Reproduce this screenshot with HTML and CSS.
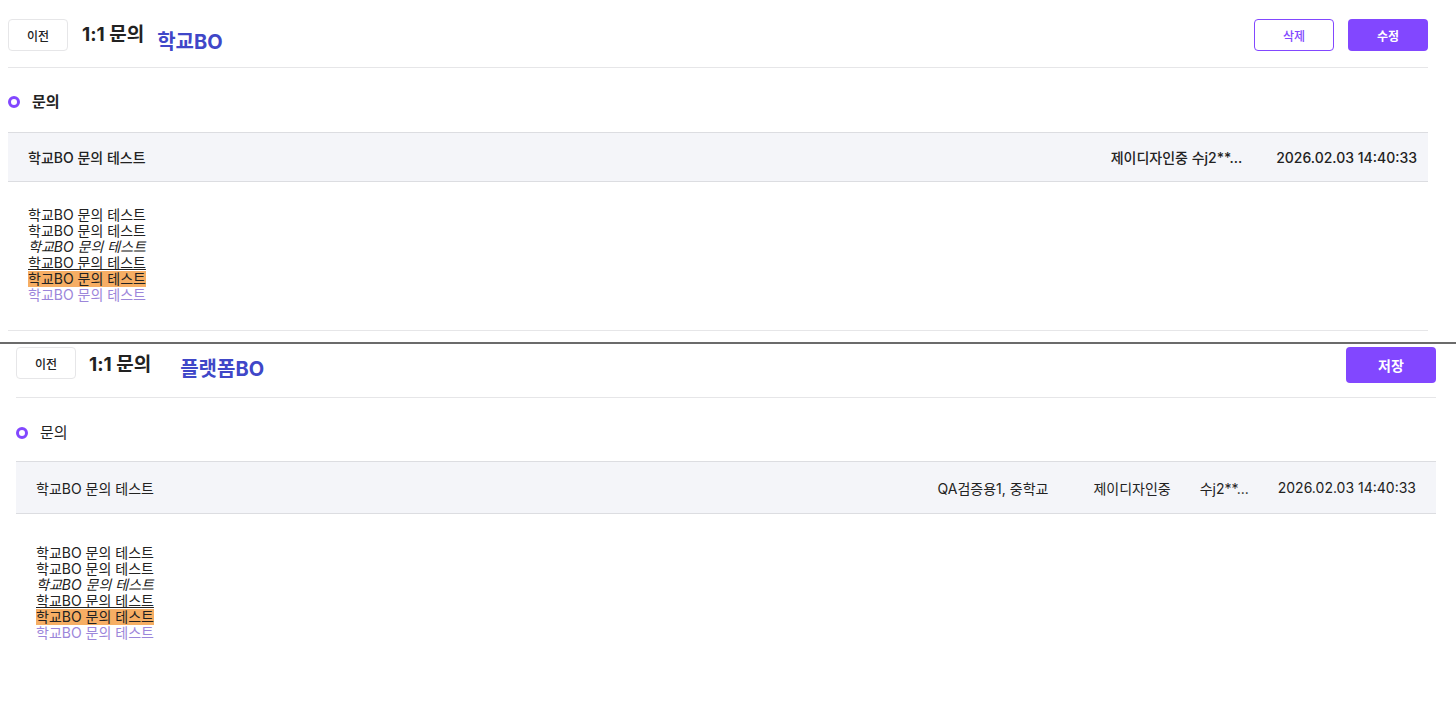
FILE: index.html
```html
<!DOCTYPE html>
<html lang="ko">
<head>
    <meta charset="UTF-8">
    <meta name="viewport" content="width=device-width, initial-scale=1.0">
    <title>1:1 문의</title>
    <link rel="stylesheet" href="styles.css">
</head>

<body>
    <!-- 학교BO 화면 -->
    <div class="panel panel-school">
        <div class="page-head">
            <div class="head-left">
                <button class="btn-back">이전</button>
                <h1 class="page-title">1:1 문의</h1>
                <span class="bo-label">학교BO</span>
            </div>
            <div class="head-right">
                <button class="btn-line">삭제</button>
                <button class="btn-fill">수정</button>
            </div>
        </div>

        <h2 class="section-title"><span class="dot"></span>문의</h2>

        <div class="inquiry">
            <div class="inquiry-head">
                <p class="inquiry-subject">학교BO 문의 테스트</p>
                <span class="meta meta-writer">제이디자인중 수j2**...</span>
                <span class="meta meta-date">2026.02.03 14:40:33</span>
            </div>
            <div class="inquiry-body">
                <p>학교BO 문의 테스트</p>
                <p>학교BO 문의 테스트</p>
                <p><em>학교BO 문의 테스트</em></p>
                <p><u>학교BO 문의 테스트</u></p>
                <p><span class="mark">학교BO 문의 테스트</span></p>
                <p class="soft">학교BO 문의 테스트</p>
            </div>
        </div>
    </div>

    <hr class="split">

    <!-- 플랫폼BO 화면 -->
    <div class="panel panel-platform">
        <div class="page-head">
            <div class="head-left">
                <button class="btn-back">이전</button>
                <h1 class="page-title">1:1 문의</h1>
                <span class="bo-label">플랫폼BO</span>
            </div>
            <div class="head-right">
                <button class="btn-fill btn-save">저장</button>
            </div>
        </div>

        <h2 class="section-title"><span class="dot"></span>문의</h2>

        <div class="inquiry">
            <div class="inquiry-head">
                <p class="inquiry-subject">학교BO 문의 테스트</p>
                <span class="meta meta-school">QA검증용1, 중학교</span>
                <span class="meta meta-org">제이디자인중</span>
                <span class="meta meta-user">수j2**...</span>
                <span class="meta meta-date">2026.02.03 14:40:33</span>
            </div>
            <div class="inquiry-body">
                <p>학교BO 문의 테스트</p>
                <p>학교BO 문의 테스트</p>
                <p><em>학교BO 문의 테스트</em></p>
                <p><u>학교BO 문의 테스트</u></p>
                <p><span class="mark">학교BO 문의 테스트</span></p>
                <p class="soft">학교BO 문의 테스트</p>
            </div>
        </div>
    </div>
</body>
</html>
```

FILE: styles.css
```css
body
{
    margin: 0;
    background: #fff;
    color: #222;
    font-family: Inter, "Noto Sans CJK KR", sans-serif;
}

p
{
    margin: 0;
}

.panel
{
    width: 1420px;
}

.panel-school
{
    margin-left: 8px;
    padding-top: 19px;
}

.panel-platform
{
    margin-left: 16px;
    padding-top: 3px;
}

.page-head
{
    display: flex;
    justify-content: space-between;
    align-items: flex-start;
    border-bottom: 1px solid #e6e6e8;
    padding-bottom: 16px;
}

.panel-platform .page-head
{
    padding-bottom: 14px;
}

.head-left
{
    display: flex;
    align-items: center;
    height: 32px;
}

.head-right
{
    display: flex;
    gap: 14px;
}

button
{
    font-family: inherit;
    cursor: pointer;
    border-radius: 4px;
}

.btn-back
{
    width: 60px;
    height: 32px;
    background: #fff;
    border: 1px solid #e6e6e8;
    font-size: 12px;
    font-weight: 500;
    color: #222;
    padding: 0;
}

.page-title
{
    margin: 0 0 0 14px;
    font-size: 19px;
    font-weight: 700;
    line-height: 24px;
}

.bo-label
{
    margin-left: 13px;
    font-size: 20px;
    font-weight: 700;
    color: #4047c8;
    position: relative;
    top: 5px;
}

.panel-platform .page-title
{
    margin-left: 13px;
    position: relative;
    top: 2px;
}

.panel-platform .bo-label
{
    margin-left: 29px;
    top: 4px;
}

.btn-line
{
    width: 80px;
    height: 32px;
    background: #fff;
    border: 1px solid #8247ff;
    color: #8247ff;
    font-size: 12px;
    font-weight: 500;
}

.btn-fill
{
    width: 80px;
    height: 32px;
    background: #8247ff;
    border: none;
    color: #fff;
    font-size: 12px;
    font-weight: 700;
}

.btn-save
{
    width: 90px;
    height: 36px;
    font-size: 14px;
}

.section-title
{
    display: flex;
    align-items: center;
    gap: 12px;
    margin: 22px 0 18px;
    font-size: 15px;
    font-weight: 700;
    line-height: 24px;
}

.panel-platform .section-title
{
    margin: 23px 0 16px;
    font-weight: 400;
}

.dot
{
    width: 12px;
    height: 12px;
    box-sizing: border-box;
    border: 3px solid #8247ff;
    border-radius: 50%;
}

.inquiry-head
{
    display: flex;
    align-items: center;
    height: 48px;
    padding: 0 11px 0 20px;
    background: #f4f5f9;
    border-top: 1px solid #dcdde1;
    border-bottom: 1px solid #dcdde1;
    font-size: 14px;
    font-weight: 500;
}

.panel-platform .inquiry-head
{
    height: 51px;
    padding-right: 20px;
    font-weight: 400;
}

.inquiry-subject
{
    flex: 1;
}

.meta-date
{
    margin-left: 34px;
}

.meta-org
{
    margin-left: 45px;
}

.meta-user
{
    margin-left: 29px;
}

.panel-platform .meta-date
{
    margin-left: 29px;
}

.inquiry-body
{
    padding: 25px 20px 27px;
    border-bottom: 1px solid #e6e6e8;
    font-size: 14px;
    line-height: 16px;
}

.panel-platform .inquiry-body
{
    padding-top: 31px;
    border-bottom: none;
}

.inquiry-body em
{
    font-style: italic;
}

.inquiry-body u
{
    text-underline-offset: 1px;
}

.mark
{
    display: inline-block;
    line-height: 16px;
    background: #f6ae64;
}

.soft
{
    color: #9c86da;
}

.split
{
    margin: 11px 0 0;
    border: none;
    height: 2px;
    background: #6b6b6b;
}
```
